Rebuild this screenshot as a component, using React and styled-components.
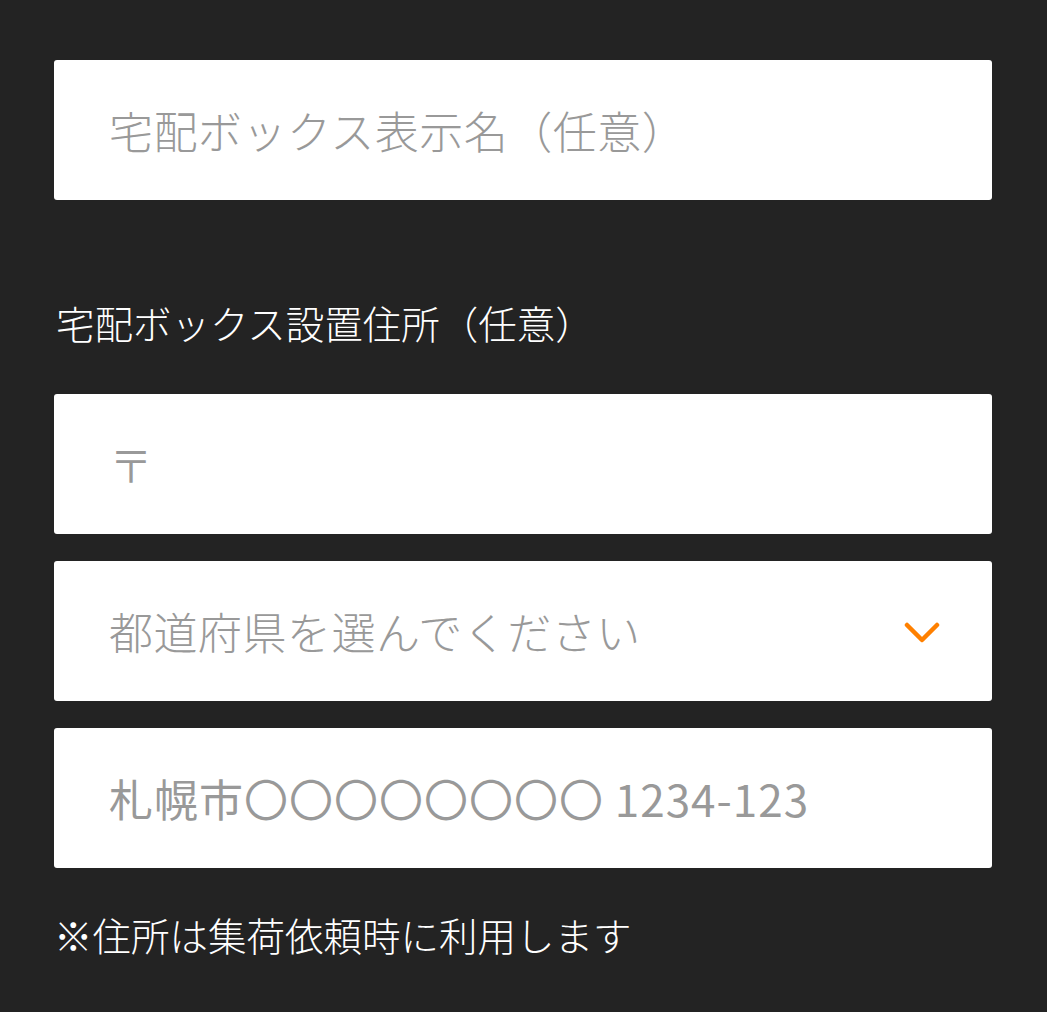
import React from 'react'
import styled, { createGlobalStyle } from 'styled-components'

const GlobalStyle = createGlobalStyle`
    html, body {
        margin: 0;
        padding: 0;
        background: #232323;
    }
    body {
        font-family: "Noto Sans CJK JP", "Noto Sans", sans-serif;
    }
`;

const Page = styled.div`
    padding: 60px 55px 40px 54px;
    display: flex;
    flex-direction: column;
    width: 938px;
`;

const Box = styled.div`
    height: 140px;
    background: #ffffff;
    border-radius: 3px;
    display: flex;
    align-items: center;
    padding: 0 52px 0 55px;
    box-sizing: border-box;
    margin-top: ${prop => prop.gap || 0}px;
`;

const Input = styled.input`
    flex: 1;
    min-width: 0;
    border: none;
    outline: none;
    background: transparent;
    padding: 0;
    font-family: "Noto Sans CJK JP", sans-serif;
    font-size: 44px;
    font-weight: ${prop => prop.weight || 300};
    letter-spacing: ${prop => prop.spacing || 0.5}px;
    color: #333;
    &::placeholder {
        color: #999999;
        opacity: 1;
    }
`;

const SelectText = styled.div`
    flex: 1;
    font-size: 44px;
    font-weight: 300;
    letter-spacing: 0.5px;
    color: #999999;
    line-height: 1;
`;

const Chevron = styled.svg`
    width: 36px;
    height: 24px;
    margin-top: 6px;
    flex-shrink: 0;
`;

const Label = styled.div`
    color: #ffffff;
    font-size: 38.5px;
    font-weight: 300;
    line-height: 57px;
    margin: ${prop => prop.margin};
`;

export default function App() {
    return (
        <>
            <GlobalStyle />
            <Page>
                <Box>
                    <Input placeholder="宅配ボックス表示名（任意）" />
                </Box>
                <Label margin="94px 0 0 2px">宅配ボックス設置住所（任意）</Label>
                <Box gap={43}>
                    <Input placeholder="〒" />
                </Box>
                <Box gap={27}>
                    <SelectText>都道府県を選んでください</SelectText>
                    <Chevron viewBox="0 0 36 24">
                        <path d="M3 3 L18 18 L33 3" fill="none" stroke="#ff8000" strokeWidth="4.5" strokeLinecap="round" strokeLinejoin="round" />
                    </Chevron>
                </Box>
                <Box gap={27}>
                    <Input weight={400} spacing={1} placeholder="札幌市〇〇〇〇〇〇〇〇 1234-123" />
                </Box>
                <Label margin="38px 0 0 0">※住所は集荷依頼時に利用します</Label>
            </Page>
        </>
    )
}
